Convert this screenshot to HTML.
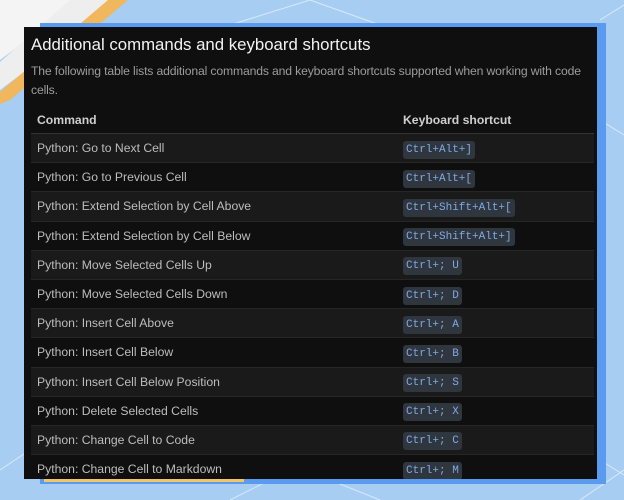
<!DOCTYPE html>
<html><head><style>
body{margin:0;width:624px;height:500px;overflow:hidden;position:relative;background:#a8cdf3;font-family:"Liberation Sans",sans-serif}
.bg{position:absolute;inset:0}
.blue{position:absolute;left:40px;top:23px;width:566px;height:461px;background:#5a9bef}
.yel{position:absolute;left:44px;top:475px;width:200px;height:7px;background:#f3c56a}
.panel{position:absolute;left:24px;top:27px;width:573px;height:452px;background:#0f0f0f;overflow:hidden}
h2{margin:0;position:absolute;left:7px;top:8px;color:#f2f2f2;font-size:16.8px;font-weight:normal}
p{margin:0;position:absolute;left:7px;top:35px;width:566px;color:#9c9c9c;font-size:12.2px;line-height:19px;letter-spacing:-0.15px}
table{position:absolute;left:7px;top:79px;width:563px;border-collapse:collapse;font-size:12.2px}
th{text-align:left;color:#cfcfcf;font-weight:bold;padding:0 6px;height:27px;border-bottom:1px solid #333}
td{color:#bdbdbd;padding:0 6px;height:28.2px;border-bottom:1px solid #262626}
tr.l td{background:#1a1a1a}
td:first-child,th:first-child{width:354px}
code{font-family:"Liberation Mono",monospace;font-size:11px;color:#7fa9e6;background:#30363e;padding:3px 3px;border-radius:3px}
</style></head><body>
<svg class="bg" width="624" height="500">
<polygon points="0,0 80,0 0,60" fill="#f4f4f4"/>
<polygon points="70,0 125,0 20,75 0,90 0,62" fill="#eeeeee"/>
<polygon points="108,0 128,0 10,100 0,104 0,92" fill="#f0b75c"/>
<g stroke="#d8e9fb" stroke-width="1" fill="none">
<line x1="230" y1="25" x2="310" y2="0"/><line x1="310" y1="0" x2="380" y2="25"/>
<line x1="600" y1="20" x2="624" y2="5"/><line x1="600" y1="120" x2="624" y2="135"/>
<line x1="0" y1="470" x2="30" y2="450"/><line x1="230" y1="500" x2="270" y2="480"/>
<line x1="330" y1="480" x2="380" y2="500"/><line x1="580" y1="500" x2="624" y2="470"/>
<line x1="600" y1="460" x2="624" y2="475"/>
</g></svg>
<div class="blue"></div><div class="yel"></div>
<div class="panel">
<h2>Additional commands and keyboard shortcuts</h2>
<p>The following table lists additional commands and keyboard shortcuts supported when working with code cells.</p>
<table>
<tr><th>Command</th><th>Keyboard shortcut</th></tr>
<tr class="l"><td>Python: Go to Next Cell</td><td><code>Ctrl+Alt+]</code></td></tr>
<tr><td>Python: Go to Previous Cell</td><td><code>Ctrl+Alt+[</code></td></tr>
<tr class="l"><td>Python: Extend Selection by Cell Above</td><td><code>Ctrl+Shift+Alt+[</code></td></tr>
<tr><td>Python: Extend Selection by Cell Below</td><td><code>Ctrl+Shift+Alt+]</code></td></tr>
<tr class="l"><td>Python: Move Selected Cells Up</td><td><code>Ctrl+; U</code></td></tr>
<tr><td>Python: Move Selected Cells Down</td><td><code>Ctrl+; D</code></td></tr>
<tr class="l"><td>Python: Insert Cell Above</td><td><code>Ctrl+; A</code></td></tr>
<tr><td>Python: Insert Cell Below</td><td><code>Ctrl+; B</code></td></tr>
<tr class="l"><td>Python: Insert Cell Below Position</td><td><code>Ctrl+; S</code></td></tr>
<tr><td>Python: Delete Selected Cells</td><td><code>Ctrl+; X</code></td></tr>
<tr class="l"><td>Python: Change Cell to Code</td><td><code>Ctrl+; C</code></td></tr>
<tr><td>Python: Change Cell to Markdown</td><td><code>Ctrl+; M</code></td></tr>
</table>
</div>
</body></html>
